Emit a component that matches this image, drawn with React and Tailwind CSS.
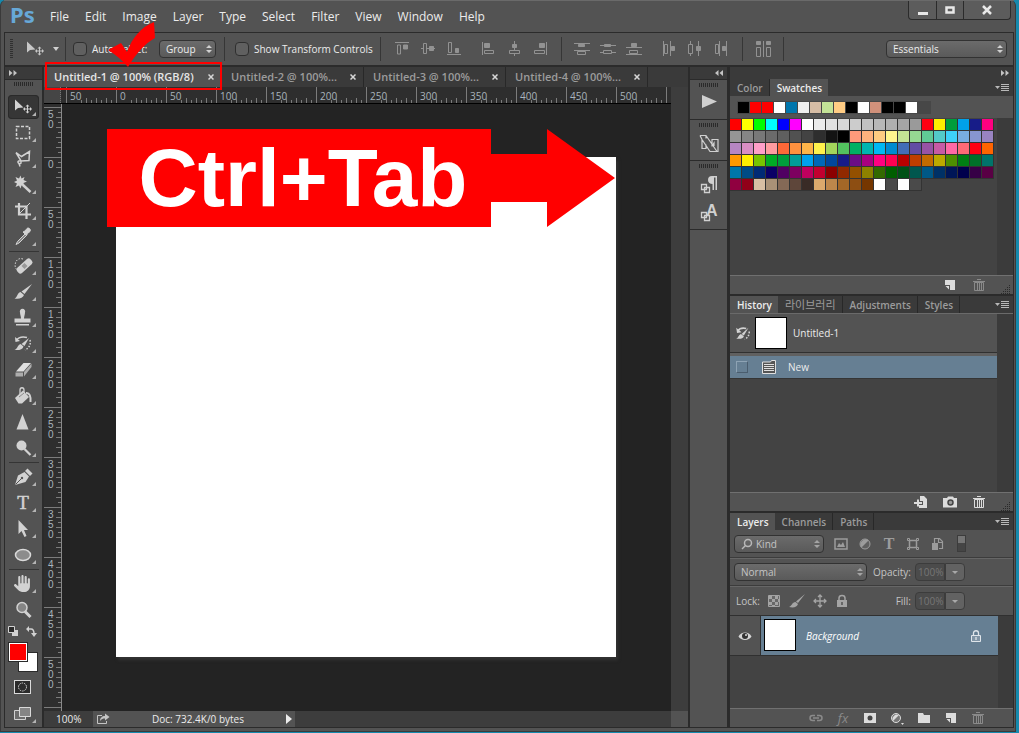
import { FaHand } from "react-icons/fa6";

const menus = ["File", "Edit", "Image", "Layer", "Type", "Select", "Filter", "View", "Window", "Help"];

const recent = [
  "#000", "#f00", "#f00", "#fff", "#0076ad", "#efefef", "#d6bda5", "#c4e397", "#ffcc84", "#000",
  "#fff", "#d1917b", "#000", "#000", "#fff",
];

const swatches = [
  "#f00", "#ff0", "#0f0", "#0ff", "#00f", "#f0f", "#fff", "#ebebeb", "#e1e1e1", "#d7d7d7", "#cccccc",
  "#c2c2c2", "#b8b8b8", "#b0b0b0", "#a5a5a5", "#9a9a9a", "#ff0012", "#ffef00", "#009d3c", "#00a1e9", "#171c88", "#ff0080",
  "#959595", "#858585", "#787878", "#6b6b6b", "#5f5f5f", "#515151", "#434343", "#2e2e2e", "#131313", "#000", "#ff9a7b",
  "#ffb27d", "#ffcb81", "#fff58e", "#c4e394", "#96d792", "#60ca95", "#53cac8", "#3ed0f8", "#78ade1", "#8795d0", "#9983c1",
  "#b686c2", "#d98ec4", "#ff9fc8", "#ff9ca0", "#ff6838", "#ff913f", "#ffb549", "#fff14c", "#a3d55b", "#53c25f", "#00b064",
  "#00b5b0", "#00b8f3", "#008bd0", "#426db7", "#624ca4", "#9853a4", "#c75aa5", "#ff68a5", "#ff6976", "#ff0012", "#ff6400",
  "#ff9900", "#ffef00", "#77c400", "#00ac25", "#009d3c", "#009e98", "#00a1ed", "#0068b8", "#00479d", "#171b88", "#6b0d86",
  "#a80080", "#ff0080", "#ff0052", "#b90000", "#bf3e00", "#c46b00", "#bca900", "#4d8f00", "#007e13", "#007029", "#00746a",
  "#0076aa", "#004b85", "#002a75", "#0a0066", "#500062", "#7d0060", "#bf005e", "#c2002f", "#8c0000", "#912900", "#935000",
  "#8d8200", "#336900", "#005e00", "#005116", "#00574e", "#005886", "#003166", "#001657", "#00004c", "#360046", "#590044",
  "#900040", "#910019", "#d8bfa4", "#a99177", "#846956", "#5e463a", "#392b26", "#dba96c", "#bd874b", "#a46727", "#8d4e12",
  "#753600", "#fff", "#4a4a4a", "#fff", "#4a4a4a",
];

function Tool({ label, active, flyout = true, children }) {
  return (
    <button
      aria-label={label}
      className={
        active
          ? "h-6 w-[31px] rounded-sm bg-[#363636] ring-1 ring-inset ring-[#2a2a2a]"
          : "h-6 w-[31px] rounded-sm"
      }
    >
      <svg viewBox="0 0 31 24" className="h-6 w-[31px]" fill="#d2d2d2" stroke="none">
        {children}
        {flyout && <path d="M28 17v4h-4z" fill="#b4b4b4" />}
      </svg>
    </button>
  );
}

function Rule() {
  return <div className="my-0.5 h-px w-[30px] bg-[#353535]" />;
}

function MoveIcon() {
  return (
    <>
      <path d="M7 4.500v11l3-2.500 5.500-.5z" />
      <path d="M19.500 9.500l2 2h-1.500v2h2v-1.500l2 2-2 2v-1.500h-2v2h1.500l-2 2-2-2h1.500v-2h-2v1.500l-2-2 2-2v1.500h2v-2h-1.500z" />
    </>
  );
}

function Chevrons({ flip }) {
  return (
    <svg viewBox="0 0 8 6" className="h-1.5 w-2" fill="#c4c4c4">
      <path d={flip ? "M3.500 0v6L0 3zM8 0v6L4.500 3z" : "M0 0v6l3.500-3zM4.500 0v6L8 3z"} />
    </svg>
  );
}

function Grip() {
  return (
    <svg viewBox="0 0 19 4" className="h-1 w-[19px]">
      <path d="M0 2h19" stroke="#2a2a2a" strokeWidth="4" strokeDasharray="1 1" />
    </svg>
  );
}

function Spin({ color = "#d0d0d0" }) {
  return (
    <svg viewBox="0 0 6 8" className="pointer-events-none absolute right-1 h-2 w-1.5" fill={color}>
      <path d="M3 0l3 3H0zM3 8L0 5h6z" />
    </svg>
  );
}

const alignIcons = {
  "Align top edges": <><path d="M0 1.500h14" /><path d="M2.500 4v9h3V4z" /><path d="M8.500 4v4h4V4z" fill="currentColor" /></>,
  "Align vertical centers": <><path d="M0 7.500h2M6 7.500h8" /><path d="M2.500 2.500v10h3v-10z" /><path d="M8.500 5.500v4h4v-4z" fill="currentColor" /></>,
  "Align bottom edges": <><path d="M0 13.500h14" /><path d="M1.500 1.500v10h3v-10z" /><path d="M8.500 7.500v4h3v-4z" fill="currentColor" /></>,
  "Align left edges": <><path d="M1.500 1v13" /><path d="M3.500 9.500h9v3h-9z" /><path d="M3.500 2.500h5v4h-5z" fill="currentColor" /></>,
  "Align horizontal centers": <><path d="M7.500 0v15" /><path d="M2.500 9.500h10v3h-10z" fill="#535353" /><path d="M5.500 3.500h4v3h-4z" fill="currentColor" /></>,
  "Align right edges": <><path d="M13.500 1v13" /><path d="M1.500 9.500h10v3h-10z" /><path d="M6.500 2.500h5v4h-5z" fill="currentColor" /></>,
  "Distribute top edges": <><path d="M0 2.500h16M0 9.500h16" /><path d="M4.500 3.500h6v2h-6z" fill="currentColor" /><path d="M3.500 10.500h8v3h-8z" /></>,
  "Distribute vertical centers": <><path d="M0 4.500h16M0 11.500h16" /><path d="M4.500 3.500h6v2h-6z" fill="currentColor" /><path d="M3.500 9.500h8v3h-8z" fill="#535353" /></>,
  "Distribute bottom edges": <><path d="M0 6.500h16M0 13.500h16" /><path d="M5.500 2.500h5v3h-5z" fill="currentColor" /><path d="M3.500 9.500h8v3h-8z" /></>,
  "Distribute left edges": <><path d="M1.500 0v15M8.500 0v15" /><path d="M2.500 3.500h3v9h-3z" /><path d="M9.500 5.500h3v4h-3z" fill="currentColor" /></>,
  "Distribute horizontal centers": <><path d="M2.500 0v15M10.500 0v15" /><path d="M.5 3.500h4v9h-4z" fill="#535353" /><path d="M8.500 5.500h4v4h-4z" fill="currentColor" /></>,
  "Distribute right edges": <><path d="M5.500 0v15M12.500 0v15" /><path d="M1.500 3.500h3v9h-3z" /><path d="M8.500 5.500h3v4h-3z" fill="currentColor" /></>,
  "Auto-align layers": <><path d="M8.500 0v16" /><path d="M1.500 6.500h4v9h-4zM11.500 6.500h4v9h-4z" /><path d="M1.500.5h4v3h-4zM11.500.5h4v3h-4z" fill="currentColor" /></>,
};

function AlignGroup({ names }) {
  return (
    <div className="flex gap-2.5">
      {names.map((n) => (
        <button key={n} aria-label={n} className="text-[#929292]">
          <svg viewBox="0 0 16 16" className="size-4" fill="none" stroke="currentColor">
            {alignIcons[n]}
          </svg>
        </button>
      ))}
    </div>
  );
}

function VLine() {
  return <div className="h-6 w-px bg-[#363636]" />;
}

function MenuBar() {
  return (
    <header className="flex h-8 shrink-0 items-start border-t border-[#6a6a6a] pr-[3px] pl-1.5">
      <span className="mr-4 w-6 text-[22px] leading-[27px] font-bold text-[#67a8d8] [font-family:'Noto_Sans',sans-serif]">
        Ps
      </span>
      <nav className="flex gap-4 text-xs leading-[31px] text-[#ececec]">
        {menus.map((m) => (
          <button key={m}>{m}</button>
        ))}
      </nav>
      <div className="ml-auto flex h-[19px] divide-x divide-[#2b2b2b] rounded-b-sm border-x border-b border-[#2b2b2b] bg-[#5c5c5c]">
        <button aria-label="Minimize" className="flex w-7 items-center justify-center">
          <svg viewBox="0 0 12 12" className="size-3"><path d="M1 8h10v3H1z" fill="#e8e8e8" /></svg>
        </button>
        <button aria-label="Maximize" className="flex w-[27px] items-center justify-center">
          <svg viewBox="0 0 12 12" className="size-3"><path d="M2.500 3.500h7v5h-7z" fill="none" stroke="#e8e8e8" strokeWidth="2.500" /></svg>
        </button>
        <button aria-label="Close" className="flex w-[46px] items-center justify-center">
          <svg viewBox="0 0 12 12" className="size-3"><path d="M2 2l8 8M10 2l-8 8" stroke="#e8e8e8" strokeWidth="2.500" /></svg>
        </button>
      </div>
    </header>
  );
}

const box = "size-3.5 appearance-none rounded-sm border border-[#2f2f2f] bg-[#606060]";
const select =
  "appearance-none rounded-sm border border-[#323232] bg-gradient-to-b from-[#6b6b6b] to-[#5a5a5a] pl-1.5 outline-none";

function OptionsBar() {
  return (
    <div className="flex h-[34px] shrink-0 items-center border border-[#2b2b2b] pl-1 text-[#ececec]">
      <svg viewBox="0 0 3 20" className="mr-3 ml-px h-5 w-[3px]">
        <path d="M1.500 0v20" stroke="#303030" strokeWidth="3" strokeDasharray="1 1" />
      </svg>
      <svg viewBox="5 3 20 18" className="h-[18px] w-5" fill="#c8c8c8"><MoveIcon /></svg>
      <svg viewBox="0 0 6 4" className="ml-2 h-1 w-1.5" fill="#d0d0d0"><path d="M0 0h6L3 4z" /></svg>
      <div className="mr-[7px] ml-1.5"><VLine /></div>
      <label className="flex items-center gap-[5px]">
        <input type="checkbox" className={box} />
        <span className="w-[67px]">Auto-Select:</span>
      </label>
      <div className="relative flex items-center">
        <select aria-label="Auto-select target" className={select + " h-[18px] w-[57px]"}>
          <option>Group</option>
        </select>
        <Spin />
      </div>
      <div className="mr-2.5 ml-2"><VLine /></div>
      <label className="flex items-center gap-[5px]">
        <input type="checkbox" className={box} />
        <span className="w-[126px] whitespace-nowrap">Show Transform Controls</span>
      </label>
      <VLine />
      <div className="ml-3.5 flex items-center">
        <AlignGroup names={["Align top edges", "Align vertical centers", "Align bottom edges"]} />
        <div className="w-[18px]" />
        <AlignGroup names={["Align left edges", "Align horizontal centers", "Align right edges"]} />
        <div className="mx-3"><VLine /></div>
        <AlignGroup names={["Distribute top edges", "Distribute vertical centers", "Distribute bottom edges"]} />
        <div className="w-5" />
        <AlignGroup names={["Distribute left edges", "Distribute horizontal centers", "Distribute right edges"]} />
        <div className="mx-3"><VLine /></div>
        <AlignGroup names={["Auto-align layers"]} />
        <div className="ml-3"><VLine /></div>
      </div>
      <div className="relative mr-1.5 ml-auto flex items-center">
        <select aria-label="Workspace" className={select + " h-[18px] w-[121px]"}>
          <option>Essentials</option>
        </select>
        <Spin />
      </div>
    </div>
  );
}

function Toolbar() {
  return (
    <aside className="flex w-[37px] shrink-0 flex-col bg-[#535353]">
      <div className="flex h-3 items-center bg-[#3a3a3a] pl-1"><Chevrons /></div>
      <div className="flex h-4 justify-center border-t border-[#2b2b2b] pt-0.5"><Grip /></div>
      <div className="flex flex-col items-center gap-0.5">
        <Tool label="Move" active><MoveIcon /></Tool>
        <Tool label="Marquee">
          <path d="M8.500 5.500h13v12h-13z" fill="none" stroke="#d2d2d2" strokeWidth="1.500" strokeDasharray="3 1.500" />
        </Tool>
        <Tool label="Lasso">
          <path d="M8 5.500l5.500 4 8-5-.5 9-8 .5L8 5.500M13 14c-3-1-4 1.500-2 2.500s3-1.500 1-3M11 16.500l1 3" fill="none" stroke="#d2d2d2" strokeWidth="1.500" />
        </Tool>
        <Tool label="Magic wand">
          <path d="M12.500 2.500l1 3 3-1.500-1 3 3.500 1.500-3.500 1.500 1 3.500-3-1-1 3-1.500-3-3.500 1.500 1.500-3.500-3-1.500 3-1.500-1.500-3.500 3.500 1.500z" />
          <path d="M15 12l7.500 7" stroke="#d2d2d2" strokeWidth="2.500" />
        </Tool>
        <Tool label="Crop">
          <path d="M11 4v11.500h12M7 7.500h11.500V20" fill="none" stroke="#d2d2d2" strokeWidth="2.200" />
          <path d="M22 4L12 14" stroke="#d2d2d2" />
        </Tool>
        <Tool label="Eyedropper">
          <path d="M17 9l-7.500 7.500L8 19.500l3-1.500 7.500-7.500z" fill="#888" stroke="#d2d2d2" />
          <path d="M15 7l2-1 2-2.500c1.500-1.500 4.500 1 3 3l-2.500 2-1 2z" stroke="#d2d2d2" />
        </Tool>
      </div>
      <div className="flex justify-center"><Rule /></div>
      <div className="flex flex-col items-center gap-0.5">
        <Tool label="Healing brush">
          <rect x="7.500" y="8.500" width="18" height="7" rx="2.500" transform="rotate(-42 16.500 12)" />
          <path d="M13.500 12l3-3 3 3-3 3z" fill="#999" />
          <path d="M15 5c-6-2-9 4-7.500 9l3 3" fill="none" stroke="#d2d2d2" strokeDasharray="1.500 1.500" />
        </Tool>
        <Tool label="Brush">
          <path d="M24 4l-7.500 10-3-2.500z" />
          <path d="M12.500 12l3.500 3c-1 3-5 4.500-9.500 3.500 3-1 2.500-5.500 6-6.500z" />
        </Tool>
        <Tool label="Clone stamp">
          <path d="M12 6.500a2.700 2.700 0 115 0c0 2-1 4-1 6h6.500v4h-16v-4H13c0-2-1-4-1-6zM8 18h13v1.500H8z" />
        </Tool>
        <Tool label="History brush">
          <path d="M21 6l-4.500 8-3-2z" />
          <path d="M12.500 12l3 2.500c-1 3-4 4-9 3.500 3-1 3-5 6-6z" />
          <path d="M8 8.500c3-4 7-4 11-3" fill="none" stroke="#d2d2d2" strokeWidth="1.500" />
          <path d="M7 5l.5 5 4.500-1z" />
          <path d="M22 8c1 5-1 8-5 10" fill="none" stroke="#d2d2d2" strokeWidth="1.500" strokeDasharray="1.500 1.500" />
        </Tool>
        <Tool label="Eraser">
          <path d="M15.500 5H23l-7.500 8.500H8z" fill="#e0e0e0" />
          <path d="M7.500 14.500h7.500v4H7.500zM16 14l7.500-8.500V9L16 18.500z" fill="#adadad" />
        </Tool>
        <Tool label="Paint bucket">
          <path d="M7 14l8-7.500 6 6.500-7 6.500h-3.500z" />
          <path d="M12 12V6c0-3 4-3 4 0v4" fill="none" stroke="#d2d2d2" strokeWidth="1.300" />
          <path d="M18 9c3.500-.5 5 3 4.500 9" fill="none" stroke="#d2d2d2" strokeWidth="2" />
          <path d="M11 13l5-4" stroke="#8a8a8a" />
        </Tool>
        <Tool label="Sharpen"><path d="M14.500 4l6 15.500h-12z" /></Tool>
        <Tool label="Dodge">
          <circle cx="13.500" cy="9.500" r="5" />
          <path d="M16.500 13l6 6" stroke="#d2d2d2" strokeWidth="2.200" />
        </Tool>
      </div>
      <div className="flex justify-center"><Rule /></div>
      <div className="flex flex-col items-center gap-0.5">
        <Tool label="Pen">
          <path d="M7 20l3-9.500 6.500-3.500 4.500 4.500-3.500 5.500z" />
          <path d="M17 6l2.500-2.500 5 5L22 11z" />
          <path d="M7.500 19.500l6-6" stroke="#535353" />
          <circle cx="14" cy="13" r="1.200" fill="#535353" />
        </Tool>
        <Tool label="Type">
          <text x="15" y="18" textAnchor="middle" className="text-[19px] [font-family:'Liberation_Serif',serif]" stroke="#d2d2d2" strokeWidth="0.500">T</text>
        </Tool>
        <Tool label="Path selection"><path d="M10.500 3v14l3-3 3 6 2-1-2.500-6h4z" /></Tool>
        <Tool label="Ellipse"><ellipse cx="15" cy="12" rx="7.500" ry="5.500" fill="#8c8c8c" stroke="#dadada" strokeWidth="1.500" /></Tool>
      </div>
      <div className="flex justify-center"><Rule /></div>
      <div className="flex flex-col items-center gap-0.5">
        <Tool label="Hand"><FaHand x="6" y="3" size={17} color="#d2d2d2" /></Tool>
        <Tool label="Zoom" flyout={false}>
          <path d="M17 13.500l5.500 5.500" stroke="#d2d2d2" strokeWidth="3" />
          <circle cx="14" cy="9.500" r="5" fill="#858585" stroke="#d2d2d2" strokeWidth="1.500" />
        </Tool>
      </div>
      <div className="flex h-[18px] items-center justify-between pr-[5px] pl-[3px]">
        <button aria-label="Default colors">
          <svg viewBox="0 0 10 10" className="size-2.5"><path d="M4 4h6v6H4z" fill="#d2d2d2" /><path d="M.5.5h6v6h-6z" fill="#2b2b2b" stroke="#d2d2d2" /></svg>
        </button>
        <button aria-label="Swap colors">
          <svg viewBox="0 0 11 11" className="size-[11px]"><path d="M2 3h3c2 0 3 1 3 5" fill="none" stroke="#d2d2d2" strokeWidth="1.500" /><path d="M0 3l3-3v6zM5 7h6l-3 4z" fill="#d2d2d2" /></svg>
        </button>
      </div>
      <div className="relative mt-0.5 ml-[3px] h-[30px] w-[30px]">
        <button aria-label="Background color" className="absolute right-0 bottom-0 size-5 border border-[#2b2b2b] bg-white" />
        <button aria-label="Foreground color" className="absolute top-0 left-0 size-5 border border-[#2b2b2b] bg-[#f00] ring-1 ring-inset ring-white" />
      </div>
      <div className="mt-[3px] flex flex-col items-center gap-[3px]">
        <Tool label="Quick mask" flyout={false}>
          <rect x="6.500" y="5.500" width="16" height="13" fill="#2b2b2b" stroke="#dadada" />
          <circle cx="14.500" cy="12" r="4" fill="none" stroke="#dadada" strokeDasharray="1.500 1" />
        </Tool>
        <Tool label="Screen mode">
          <path d="M6.500 8.500h11v9h-11z" fill="#6d6d6d" stroke="#d2d2d2" />
          <path d="M11.500 5.500h11v9h-11z" fill="#858585" stroke="#dadada" />
        </Tool>
      </div>
    </aside>
  );
}

function DocTab({ title, active }) {
  return (
    <div
      className={
        active
          ? "relative flex w-[178px] shrink-0 items-center justify-between bg-[#535353] pr-2 pl-2.5 text-[#e6e6e6]"
          : "flex w-[142px] shrink-0 items-center justify-between border-r border-[#282828] pr-[7px] pl-[9px] text-[#9c9c9c]"
      }
    >
      <button className="text-[11px] font-semibold whitespace-nowrap">{title}</button>
      <button aria-label="Close tab">
        <svg viewBox="0 0 6 6" className="size-1.5"><path d="M.5.5l5 5M5.500.5l-5 5" stroke="#d8d8d8" strokeWidth="1.500" /></svg>
      </button>
      {active && (
        <>
          <div className="pointer-events-none absolute -top-[5px] right-0 -bottom-[3px] left-px z-10 border-2 border-[#f00]" />
          <svg viewBox="0 0 48 46" className="pointer-events-none absolute -top-[45px] left-16 z-10 h-[46px] w-12" fill="#f00">
            <path d="M0 28l13-7 6 9C24 16 33 5 46 0l1 16C36 22 28 32 20 45 14 38 8 33 0 28z" />
          </svg>
        </>
      )}
    </div>
  );
}

const marks = ["50", "0", "50", "100", "150", "200", "250", "300", "350", "400", "450", "500", ""];

function Rulers({ vertical }) {
  if (vertical) {
    return (
      <div className="w-[18px] shrink-0 overflow-hidden border-r border-[#8a8a8a] bg-[#2e2e2e] pt-[3px] text-[#a9b4bd]">
        {marks.map((m, i) => (
          <div key={i} className="flex h-[50px] justify-between border-t border-[#7c7c7c] pl-1">
            <div className="flex w-1.5 flex-col pt-0.5 leading-[10px] [font-family:'Liberation_Sans',sans-serif]">
              {m.split("").map((c, j) => (
                <span key={j}>{c}</span>
              ))}
            </div>
            <svg viewBox="0 0 5 49" className="h-[49px] w-[5px]" stroke="#7c7c7c">
              <path d="M0 9.500h5M0 19.500h5M0 29.500h5M0 39.500h5M2 4.500h3M2 14.500h3M2 24.500h3M2 34.500h3M2 44.500h3" />
            </svg>
          </div>
        ))}
      </div>
    );
  }
  return (
    <div className="flex h-[17px] overflow-hidden border-b border-black bg-[#2e2e2e] text-[#a9b4bd]">
      <div className="w-[17px] shrink-0 border-r border-dotted border-[#777] bg-[#454545]" />
      <div className="w-[5px] shrink-0" />
      {marks.map((m, i) => (
        <div key={i} className="flex h-4 w-[50px] shrink-0 flex-col justify-between border-l border-[#7c7c7c]">
          <span className="h-[11px] pl-[3px] leading-[19px]">{m}</span>
          <svg viewBox="0 0 49 5" className="h-[5px] w-[49px] shrink-0" stroke="#7c7c7c">
            <path d="M19.500 0v5M29.500 0v5M39.500 0v5M14.500 2v3M24.500 2v3M34.500 2v3M44.500 2v3" />
          </svg>
        </div>
      ))}
    </div>
  );
}

function Document() {
  return (
    <main className="flex min-w-0 flex-1 flex-col bg-[#232323]">
      <div className="flex h-5 shrink-0 bg-[#3a3a3a]">
        <DocTab title="Untitled-1 @ 100% (RGB/8)" active />
        <DocTab title="Untitled-2 @ 100%..." />
        <DocTab title="Untitled-3 @ 100%..." />
        <DocTab title="Untitled-4 @ 100%..." />
      </div>
      <div className="flex min-h-0 flex-1">
        <div className="flex min-w-0 flex-1 flex-col">
          <Rulers />
          <div className="flex min-h-0 flex-1">
            <Rulers vertical />
            <div className="relative min-w-0 flex-1 overflow-hidden">
              <div className="absolute top-[53px] left-[54px] size-[500px] bg-white shadow-[2px_3px_3px_#333]" />
              <div className="absolute top-[25px] left-[45px] flex h-[98px] w-[508px]">
                <div className="flex w-96 items-center justify-center bg-[#f00] pl-2 text-[82px] font-bold whitespace-nowrap text-white [font-family:'Liberation_Sans',Arial,sans-serif]">
                  Ctrl+Tab
                </div>
                <svg viewBox="0 0 124 98" className="h-[98px] w-[124px]" fill="#f00">
                  <path d="M0 25h56V0l68 49-68 49V73H0z" />
                </svg>
              </div>
            </div>
          </div>
        </div>
        <div className="w-[17px] shrink-0 bg-[#3d3d3d]" />
      </div>
      <footer className="flex h-4 shrink-0 items-center bg-[#3d3d3d] text-[#ececec]">
        <span className="w-[49px] pl-3">100%</span>
        <div className="flex h-4 w-[202px] items-center justify-between bg-[#535353] pr-[3px] pl-[3px]">
          <button aria-label="Share">
            <svg viewBox="0 0 14 12" className="h-3 w-3.5"><path d="M6 2.500H1.500v8h9V8" fill="none" stroke="#c4c4c4" /><path d="M4 8c0-3 2-5 5-5V.5L13.500 4 9 7.500V5.500C7 5.500 5.500 6 4 8z" fill="#c4c4c4" /></svg>
          </button>
          <span>Doc: 732.4K/0 bytes</span>
          <button aria-label="Status menu">
            <svg viewBox="0 0 6 10" className="h-2.5 w-1.5"><path d="M0 0v10l6-5z" fill="#ececec" /></svg>
          </button>
        </div>
        <div className="ml-auto h-4 w-[17px] bg-[#535353]" />
      </footer>
    </main>
  );
}

function Dock() {
  return (
    <aside className="flex w-[37px] shrink-0 flex-col bg-[#535353]">
      <div className="flex h-3 items-center justify-end bg-[#3a3a3a] pr-1"><Chevrons flip /></div>
      <div className="flex h-[41px] flex-col items-center border-y border-[#2b2b2b] pt-[3px]">
        <Grip />
        <button aria-label="Actions" className="mt-2">
          <svg viewBox="0 0 16 14" className="h-3.5 w-4"><path d="M1 0v13l15-6.500z" fill="#cfcfcf" /></svg>
        </button>
      </div>
      <div className="flex h-[41px] flex-col items-center border-b border-[#2b2b2b] pt-[3px]">
        <Grip />
        <button aria-label="Brush presets" className="mt-[7px]">
          <svg viewBox="0 0 20 20" className="size-5" fill="none" stroke="#d0d0d0" strokeWidth="1.200">
            <path d="M1 1.500h6l11 16M1 1.500l2 4 8 12h8v-12h-6v7M3 5.500v9h4v-4M7 1.500v3M13 12l2-3v3" />
          </svg>
        </button>
      </div>
      <div className="flex h-[69px] flex-col items-center border-b border-[#2b2b2b] pt-[3px]">
        <Grip />
        <button aria-label="Paragraph" className="mt-[7px]">
          <svg viewBox="0 0 18 20" className="h-5 w-[18px]" fill="#d0d0d0">
            <path d="M8 5a4 4 0 014-4h5v14h-1.500V2.500H14V15h-1.500V9C10 9 8 7.500 8 5z" />
            <path d="M4.500 12.500h5v5h-5zM1.500 9.500h5v5h-5z" fill="#535353" stroke="#d0d0d0" strokeWidth="1.300" />
          </svg>
        </button>
        <button aria-label="Character" className="mt-2">
          <svg viewBox="0 0 18 20" className="h-5 w-[18px]" fill="#d0d0d0">
            <text x="6" y="13" className="text-[16px] font-bold [font-family:'Liberation_Sans',sans-serif]">A</text>
            <path d="M4.500 12.500h5v5h-5zM1.500 9.500h5v5h-5z" fill="#535353" stroke="#d0d0d0" strokeWidth="1.300" />
          </svg>
        </button>
      </div>
    </aside>
  );
}

function PanelTabs({ names, active }) {
  return (
    <div className="flex h-[17px] shrink-0 bg-[#3a3a3a] font-semibold">
      {names.map((n) => (
        <button
          key={n}
          className={
            n === active
              ? "bg-[#535353] pr-1.5 pl-[7px] text-[#ececec]"
              : "border-r border-[#282828] pr-1.5 pl-[7px] text-[#9c9c9c] lang-ko:font-normal"
          }
        >
          {n === "라이브러리" ? <span lang="ko" className="text-[11px] font-normal">{n}</span> : n}
        </button>
      ))}
      <button aria-label="Panel menu" className="mr-1 ml-auto">
        <svg viewBox="0 0 14 8" className="h-2 w-3.5"><path d="M0 2h5L2.500 5z" fill="#b8b8b8" /><path d="M6 .5h8M6 2.500h8M6 4.500h8M6 6.500h8" stroke="#b8b8b8" /></svg>
      </button>
    </div>
  );
}

const footIcons = {
  "New item": <path d="M2 2h10v10H7V7H2zM2.500 8H6v3.500z" fill="currentColor" />,
  Delete: <><path d="M2.500 4.500h9v8h-9z" fill="none" stroke="currentColor" /><path d="M1 3.500h12M5 1.500h4M5.500 5v7M7.500 5v7M9.500 5v7" stroke="currentColor" /></>,
  "New document": <><path d="M6 1h4l3 3v9H5v-3h4V6H6z" fill="currentColor" /><path d="M0 8h8M4 4.500v7" stroke="currentColor" strokeWidth="2" /></>,
  Snapshot: <><path d="M0 3h4l1-1.500h5L11 3h3v9.500H0z" fill="currentColor" /><circle cx="7.500" cy="7.500" r="2.500" fill="#999" stroke="#444" strokeWidth="1.500" /></>,
  Link: <path d="M6 4.500H3.500a2.500 2.500 0 000 5H6M8 4.500h2.500a2.500 2.500 0 010 5H8M4 7h6" fill="none" stroke="currentColor" strokeWidth="1.500" />,
  "Layer mask": <><path d="M1 2h12v10H1z" fill="currentColor" /><circle cx="7" cy="7" r="2.500" fill="#444" /></>,
  Adjustment: <><circle cx="6" cy="7" r="4.500" fill="#777" stroke="currentColor" /><path d="M3 10A4.500 4.500 0 019 4z" fill="currentColor" /><path d="M11 12h3l-1.500 2z" fill="currentColor" /></>,
  Group: <path d="M1 2h5l1 2h6v8H1z" fill="currentColor" />,
};

function FootIcon({ name, dim }) {
  return (
    <button aria-label={name} className={dim ? "text-[#8a8a8a]" : "text-[#dcdcdc]"}>
      {name === "Layer style" ? (
        <span className="block w-3.5 text-[13px] leading-none italic">fx</span>
      ) : (
        <svg viewBox="0 0 14 14" className="size-3.5">{footIcons[name]}</svg>
      )}
    </button>
  );
}

function Resize() {
  return (
    <svg viewBox="0 0 10 10" className="size-2.5 self-end" fill="none" stroke="#2a2a2a">
      <path d="M8 1.500h2M6 3.500h4M4 5.500h6M2 7.500h8M0 9.500h10" strokeDasharray="1 1" />
    </svg>
  );
}

function PanelFoot({ children, tight }) {
  return (
    <div
      className={
        tight
          ? "mt-auto flex h-[19px] shrink-0 items-center justify-end gap-[13px] border-t border-[#707070] bg-[#535353] pr-7"
          : "mt-auto flex h-[19px] shrink-0 items-center justify-end gap-[15px] border-t border-[#707070] bg-[#535353] pr-0.5"
      }
    >
      {children}
    </div>
  );
}

const field = "h-[18px] w-[30px] rounded-l-sm border border-[#3c3c3c] bg-[#4b4b4b] pl-0.5 text-[#767676] outline-none";

function Percent({ label }) {
  return (
    <div className="ml-auto flex items-center">
      <label htmlFor={label} className="mr-1">{label}:</label>
      <input id={label} className={field} defaultValue="100%" disabled />
      <button aria-label={label + " slider"} className="flex h-[18px] w-5 items-center justify-center rounded-r-sm border border-[#3c3c3c] bg-[#626262]">
        <svg viewBox="0 0 6 3" className="h-[3px] w-1.5" fill="#a8a8a8"><path d="M0 0h6L3 3z" /></svg>
      </button>
    </div>
  );
}

function Panels() {
  return (
    <aside className="flex w-[284px] shrink-0 flex-col border-l border-[#2b2b2b]">
      <div className="flex h-3 shrink-0 items-center justify-end bg-[#3a3a3a] pr-1"><Chevrons /></div>

      {/* Swatches */}
      <section className="mb-0.5 flex h-[215px] shrink-0 flex-col bg-[#434343]">
        <PanelTabs names={["Color", "Swatches"]} active="Swatches" />
        <div className="h-[22px] bg-[#535353] pt-[5px] pl-[7px]">
          <div className="flex h-[13px] w-[194px] gap-px bg-[#474747] p-px">
            {recent.map((c, i) => (
              <button key={i} aria-label={"Recent " + c} className="size-[11px]" style={{ background: c }} />
            ))}
          </div>
        </div>
        <div className="flex min-h-0 flex-1 justify-between">
          <div className="grid auto-rows-[12px] grid-cols-[repeat(22,12px)] pt-px">
            {swatches.map((c, i) => (
              <button key={i} aria-label={"Swatch " + c} className="border-r border-b border-[#333]" style={{ background: c }} />
            ))}
          </div>
          <div className="w-4 bg-[#3b3b3b]" />
        </div>
        <PanelFoot>
          <FootIcon name="New item" />
          <FootIcon name="Delete" dim />
          <Resize />
        </PanelFoot>
      </section>

      {/* History */}
      <section className="mb-0.5 flex h-[215px] shrink-0 flex-col bg-[#434343]">
        <PanelTabs names={["History", "라이브러리", "Adjustments", "Styles"]} active="History" />
        <div className="flex min-h-0 flex-1 border-t border-[#6a6a6a]">
          <div className="flex-1">
            <div className="flex h-[39px] items-center border-b border-[#303030] bg-[#535353] pl-1.5 text-[#ececec]">
              <svg viewBox="6 3 19 17" className="mr-1 h-[13px] w-[15px]" fill="#d2d2d2">
                <path d="M22 4l-6 10-3-2zM12 12l4 3c-1 3-5 4-10 3 3-1 3-5 6-6zM6 4l1 7 6-1z" />
                <path d="M8 8c3-4 7-4 11-3" fill="none" stroke="#d2d2d2" strokeWidth="2" />
                <path d="M23 9c0 5-2 8-6 10" fill="none" stroke="#d2d2d2" strokeWidth="2" strokeDasharray="2 2" />
              </svg>
              <div className="mr-1.5 size-8 border border-black bg-white" />
              Untitled-1
            </div>
            <div className="h-[3px] bg-[#606060]" />
            <button className="flex h-[23px] w-full items-center border-b border-[#353535] bg-[#667f93] pl-1.5 text-[#ececec]">
              <span className="mr-3.5 size-3 border border-t-[#8ea3b4] border-r-[#4a5d6e] border-b-[#4a5d6e] border-l-[#8ea3b4]" />
              <svg viewBox="0 0 14 14" className="mr-3 size-3.5"><path d="M.5 2h8l1-1.500h4v13H.5z" fill="#555" stroke="#e0e0e0" /><path d="M2 4.500h10M2 6.500h10M2 8.500h10M2 10.500h10" stroke="#e0e0e0" /></svg>
              New
            </button>
          </div>
          <div className="w-4 bg-[#3b3b3b]" />
        </div>
        <PanelFoot>
          <FootIcon name="New document" />
          <FootIcon name="Snapshot" />
          <FootIcon name="Delete" />
          <Resize />
        </PanelFoot>
      </section>

      {/* Layers */}
      <section className="flex min-h-0 flex-1 flex-col bg-[#434343]">
        <PanelTabs names={["Layers", "Channels", "Paths"]} active="Layers" />
        <div className="bg-[#535353] text-[#c4c4c4]">
          <div className="flex h-7 items-center border-b border-[#3c3c3c] pl-1">
            <div className="relative flex items-center">
              <select aria-label="Filter type" className={select + " h-[18px] w-[90px] pl-[21px]"}>
                <option>Kind</option>
              </select>
              <svg viewBox="0 0 12 12" className="pointer-events-none absolute left-[7px] size-3" fill="none" stroke="#b8b8b8" strokeWidth="1.500">
                <circle cx="7" cy="5" r="3.500" /><path d="M4.500 7.500L1 11" />
              </svg>
              <Spin color="#a4a4a4" />
            </div>
            <div className="ml-2.5 flex gap-2.5 text-[#9c9c9c]">
              <button aria-label="Filter pixel layers"><svg viewBox="0 0 14 14" className="size-3.5"><path d="M1 2h12v10H1z" fill="none" stroke="currentColor" strokeWidth="1.500" /><path d="M3 10l2-4 2 2 2-3 2 5z" fill="currentColor" /></svg></button>
              <button aria-label="Filter adjustment layers"><svg viewBox="0 0 14 14" className="size-3.5"><circle cx="7" cy="7" r="5" fill="#606060" stroke="currentColor" /><path d="M3.500 10.500a5 5 0 017-7z" fill="currentColor" /></svg></button>
              <button aria-label="Filter type layers"><svg viewBox="0 0 14 14" className="size-3.5"><text x="7" y="12" textAnchor="middle" fill="currentColor" className="text-[16px] font-bold [font-family:'Liberation_Serif',serif]">T</text></svg></button>
              <button aria-label="Filter shape layers"><svg viewBox="0 0 14 14" className="size-3.5" fill="none" stroke="currentColor"><path d="M3.500 3.500h7v7h-7z" strokeWidth="1.500" /><path d="M1.500 1.500h2v2h-2zM10.500 1.500h2v2h-2zM1.500 10.500h2v2h-2zM10.500 10.500h2v2h-2z" fill="#535353" /></svg></button>
              <button aria-label="Filter smart objects"><svg viewBox="0 0 14 14" className="size-3.5"><path d="M4.500 6V1.500h5l3 3v7H9M8.500 2v3.500H12" fill="none" stroke="currentColor" strokeWidth="1.200" /><path d="M2 6h6v7H2z" fill="currentColor" /></svg></button>
            </div>
            <button aria-label="Toggle filtering" className="ml-[13px] flex h-[17px] w-[9px] items-start border border-[#3c3c3c] bg-[#454545]">
              <span className="block h-[7px] w-full bg-[#757575]" />
            </button>
          </div>
          <div className="flex h-7 items-center border-t border-b border-t-[#666] border-b-[#3c3c3c] pr-12 pl-1">
            <div className="relative flex items-center">
              <select aria-label="Blend mode" className={select + " h-[18px] w-[133px]"}>
                <option>Normal</option>
              </select>
              <Spin color="#a4a4a4" />
            </div>
            <Percent label="Opacity" />
          </div>
          <div className="flex h-[30px] items-center border-t border-b border-t-[#666] border-b-[#303030] pr-12 pl-1.5">
            <span className="w-[31px]">Lock:</span>
            <div className="flex gap-2 text-[#a4a4a4]">
              <button aria-label="Lock transparent pixels"><svg viewBox="0 0 14 14" className="size-3.5"><path d="M1.500 1.500h11v11h-11z" fill="#686868" stroke="currentColor" /><path d="M2 2h3v3H2zM8 2h3v3H8zM5 5h3v3H5zM2 8h3v3H2zM8 8h3v3H8zM11 5h1v3h-1zM5 11h3v1H5z" fill="currentColor" /></svg></button>
              <button aria-label="Lock image pixels"><svg viewBox="0 0 16 14" className="h-3.5 w-4"><path d="M16 0L9 9 7 7.500zM6.500 8L9 10c-1 3-4 4-9 3 3-1 3-5 6.500-5z" fill="currentColor" /></svg></button>
              <button aria-label="Lock position"><svg viewBox="0 0 14 14" className="size-3.5"><path d="M7 1v12M1 7h12M5 3l2-2 2 2M5 11l2 2 2-2M3 5L1 7l2 2M11 5l2 2-2 2" fill="none" stroke="currentColor" strokeWidth="1.300" /></svg></button>
              <button aria-label="Lock all"><svg viewBox="0 0 14 14" className="size-3.5"><path d="M2 6h10v7H2z" fill="currentColor" /><path d="M4 6V4c0-3.500 6-3.500 6 0v2" fill="none" stroke="currentColor" strokeWidth="1.500" /><path d="M7 8v3" stroke="#535353" strokeWidth="1.500" /></svg></button>
            </div>
            <Percent label="Fill" />
          </div>
        </div>
        <div className="flex min-h-0 flex-1">
          <div className="flex-1">
            <div className="flex h-10 border-b border-[#303030] bg-[#667f93]">
              <button aria-label="Layer visibility" className="flex w-[31px] items-center justify-center border-r border-[#303030] bg-[#535353]">
                <svg viewBox="0 0 14 10" className="h-2.5 w-3.5"><path d="M.5 5.500C3 0 11 0 13.500 5.500 11 10 3 10 .5 5.500z" fill="#d6d6d6" /><circle cx="7" cy="5" r="3" fill="#333" /><circle cx="8" cy="4" r="1" fill="#ddd" /></svg>
              </button>
              <div className="my-[3px] mr-2.5 ml-[3px] size-8 border border-black bg-white" />
              <span className="self-center text-[10px] font-medium text-white italic">Background</span>
              <svg viewBox="0 0 12 14" className="mr-4 ml-auto h-3.5 w-3 self-center"><path d="M1.500 6.500h9v6h-9z" fill="#8094a5" stroke="#dfe5ea" /><path d="M3.500 6V4c0-3 5-3 5 0v2M6 8v3" fill="none" stroke="#dfe5ea" strokeWidth="1.300" /></svg>
            </div>
          </div>
          <div className="w-[15px] bg-[#3b3b3b]" />
        </div>
        <PanelFoot tight>
          <FootIcon name="Link" dim />
          <FootIcon name="Layer style" dim />
          <FootIcon name="Layer mask" />
          <FootIcon name="Adjustment" />
          <FootIcon name="Group" />
          <FootIcon name="New item" />
          <FootIcon name="Delete" dim />
        </PanelFoot>
      </section>
    </aside>
  );
}

export default function App() {
  return (
    <div className="h-screen min-h-[733px] bg-[#1689ad] pr-[3px] pb-px text-[10px] leading-[14px] [font-family:'Open_Sans','Noto_Sans_CJK_KR',sans-serif]">
      <div className="flex h-full flex-col rounded-t-md border-x border-b border-[#3a3a3a] bg-[#535353] pr-px pb-[3px] pl-[3px]">
        <MenuBar />
        <OptionsBar />
        <div className="flex min-h-0 flex-1 gap-0.5 border-x border-b border-[#2b2b2b] bg-[#2b2b2b] pt-px">
          <Toolbar />
          <Document />
          <Dock />
          <Panels />
        </div>
      </div>
    </div>
  );
}
